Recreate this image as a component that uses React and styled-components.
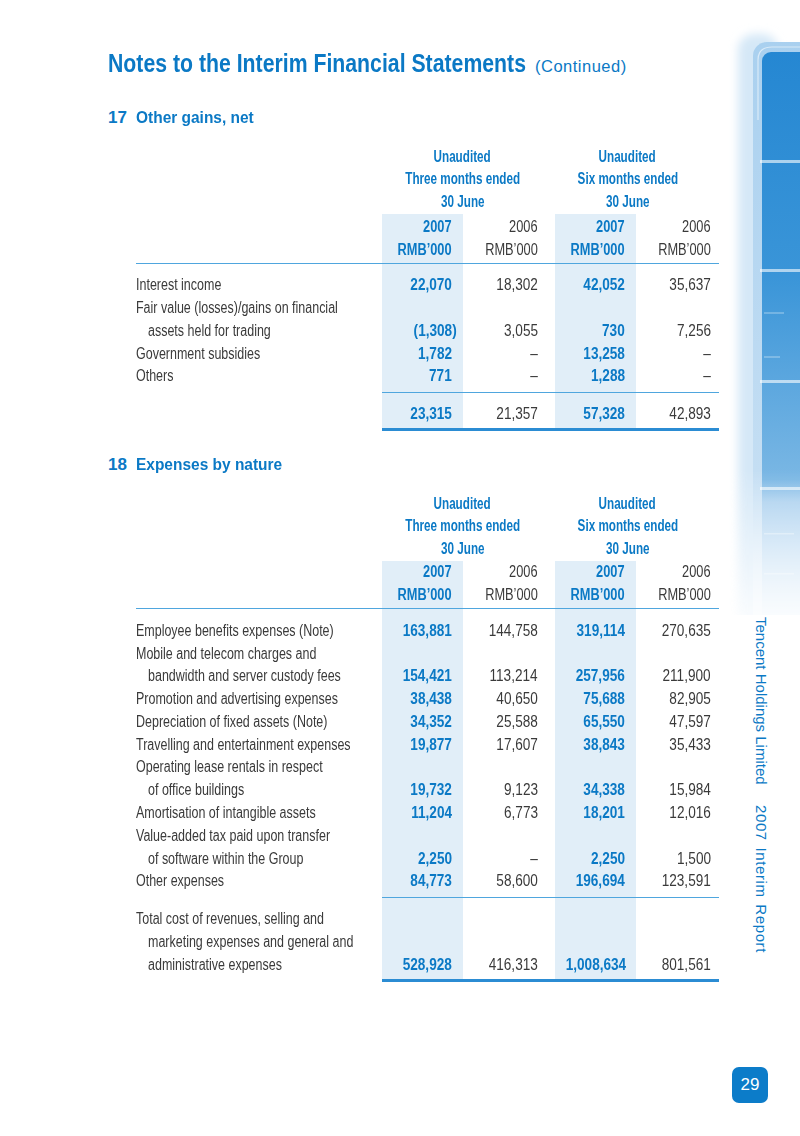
import React from 'react';
import styled, { createGlobalStyle } from 'styled-components';

const BLUE = '#0b79c5';
const INK = '#3a3a3a';
const SHADE = '#e1eef8';
const RULE = '#4fa6de';
const SANS = '"Liberation Sans", Arial, sans-serif';

const GlobalStyle = createGlobalStyle`
  html, body { margin: 0; padding: 0; background: #fff; }
  body { font-family: ${SANS}; color: ${INK}; }
`;

// the print face is a narrow grotesque; squeeze Liberation Sans to its widths
const Fit = styled.span`
  display: inline-block;
  white-space: nowrap;
  transform: scaleX(${p => p.$k});
  transform-origin: ${p => p.$o || 'left'} center;
`;

const Page = styled.div`
  width: 800px;
  height: 1136px;
  display: flex;
  overflow: hidden;
  background: #fff;
`;

const Main = styled.main`
  width: 720px;
  box-sizing: border-box;
  padding: 50px 0 0 108px;
`;

const Title = styled.h1`
  display: flex;
  align-items: baseline;
  margin: 0;
  font-size: 25px;
  line-height: 26px;
  font-weight: 700;
  color: ${BLUE};
  white-space: nowrap;
`;

const TitleMain = styled.span`
  width: 419px;
`;

const Continued = styled.span`
  margin-left: 8px;
  font-weight: 400;
  font-size: 16.5px;
  letter-spacing: 0.5px;
`;

const Heading = styled.h2`
  display: flex;
  margin: ${p => p.$top}px 0 0;
  font-size: 17px;
  line-height: 20px;
  font-weight: 700;
  color: ${BLUE};
  b { width: 28px; }
`;

const Table = styled.div`
  margin: 17.5px 0 0 28px;
  width: 583px;
`;

const Row = styled.div`
  display: grid;
  grid-template-columns: 246px 81px 92px 81px 83px;
  height: ${p => p.$h || 22.8}px;
  line-height: 22.8px;
`;

const HeadRow = styled.div`
  display: grid;
  grid-template-columns: 246px 173px 164px;
  height: 22.8px;
  line-height: 22.8px;
  font-size: 16px;
  font-weight: 700;
  color: ${BLUE};
`;

const HeadCell = styled.div`
  grid-column: ${p => p.$col};
  text-align: center;
  padding-right: ${p => p.$shift}px;
`;

const Label = styled.div`
  padding-left: ${p => (p.$indent ? 12 : 0)}px;
  font-size: 16px;
  white-space: nowrap;
`;

const pads = [11, 17, 11, 8];

const Num = styled.div`
  background: ${p => (p.$shade ? SHADE : 'transparent')};
  text-align: right;
  padding-right: ${p => pads[p.$i] - (p.$neg ? 5 : 0)}px;
  font-size: 16px;
  font-weight: ${p => (p.$strong ? 700 : 400)};
  color: ${p => (p.$strong ? BLUE : INK)};
  white-space: nowrap;
`;

const Rule = styled.div`
  margin-left: ${p => (p.$full ? 0 : 246)}px;
  height: ${p => (p.$thick ? 3 : 1)}px;
  background: ${p => (p.$thick ? '#2b8cd3' : RULE)};
`;

const Aside = styled.aside`
  width: 80px;
  display: flex;
  flex-direction: column;
`;

const Stripe = styled.svg`
  display: block;
  width: 80px;
  height: 615px;
`;

const Spine = styled.div`
  align-self: flex-start;
  margin: 2px 0 0 34px;
  writing-mode: vertical-rl;
  font-size: 15px;
  line-height: 15px;
  color: ${BLUE};
  white-space: nowrap;
  span + span {
    margin-inline-start: 20px;
    letter-spacing: 0.6px;
    word-spacing: 2px;
  }
`;

const PageNo = styled.div`
  margin: auto 0 33px 12px;
  width: 36px;
  height: 36px;
  border-radius: 7px;
  background: #0c7cc9;
  color: #fff;
  font-size: 17px;
  display: flex;
  align-items: center;
  justify-content: center;
`;

const shadeCols = [true, false, true, false];

const Cells = ({ values = ['', '', '', ''], k = 0.85 }) =>
  values.map((v, i) => (
    <Num key={i} $i={i} $shade={shadeCols[i]} $strong={shadeCols[i]} $neg={v.startsWith('(')}>
      {v && <Fit $k={k} $o="right">{v}</Fit>}
    </Num>
  ));

const Gap = ({ h }) => (
  <Row $h={h}>
    <div />
    <Cells />
  </Row>
);

const Line = ({ text, indent, values, k }) => (
  <Row>
    <Label $indent={indent}>{text && <Fit $k={0.78}>{text}</Fit>}</Label>
    <Cells values={values} k={k} />
  </Row>
);

const Item = ({ label, values }) =>
  label.map((t, i) => (
    <Line key={i} text={t} indent={i > 0} values={i === label.length - 1 ? values : undefined} />
  ));

const Head = ({ left, right }) => (
  <HeadRow>
    <HeadCell $col={2} $shift={12}><Fit $k={0.73} $o="center">{left}</Fit></HeadCell>
    <HeadCell $col={3} $shift={19}><Fit $k={0.73} $o="center">{right}</Fit></HeadCell>
  </HeadRow>
);

const Statement = ({ lead, bodyGap, rows, total }) => (
  <Table>
    <Head left="Unaudited" right="Unaudited" />
    <Head left="Three months ended" right="Six months ended" />
    <Head left="30 June" right="30 June" />
    {lead > 0 && <Gap h={lead} />}
    <Line values={['2007', '2006', '2007', '2006']} k={0.8} />
    <Line values={['RMB’000', 'RMB’000', 'RMB’000', 'RMB’000']} k={0.8} />
    <Gap h={1.2} />
    <Rule $full />
    <Gap h={bodyGap} />
    {rows.map((r, i) => (
      <Item key={i} label={r.label} values={r.values} />
    ))}
    <Gap h={3.6} />
    <Rule />
    <Gap h={10.4} />
    <Item label={total.label} values={total.values} />
    <Gap h={2} />
    <Rule $thick />
  </Table>
);

const gains = [
  { label: ['Interest income'], values: ['22,070', '18,302', '42,052', '35,637'] },
  { label: ['Fair value (losses)/gains on financial', 'assets held for trading'], values: ['(1,308)', '3,055', '730', '7,256'] },
  { label: ['Government subsidies'], values: ['1,782', '–', '13,258', '–'] },
  { label: ['Others'], values: ['771', '–', '1,288', '–'] },
];

const expenses = [
  { label: ['Employee benefits expenses (Note)'], values: ['163,881', '144,758', '319,114', '270,635'] },
  { label: ['Mobile and telecom charges and', 'bandwidth and server custody fees'], values: ['154,421', '113,214', '257,956', '211,900'] },
  { label: ['Promotion and advertising expenses'], values: ['38,438', '40,650', '75,688', '82,905'] },
  { label: ['Depreciation of fixed assets (Note)'], values: ['34,352', '25,588', '65,550', '47,597'] },
  { label: ['Travelling and entertainment expenses'], values: ['19,877', '17,607', '38,843', '35,433'] },
  { label: ['Operating lease rentals in respect', 'of office buildings'], values: ['19,732', '9,123', '34,338', '15,984'] },
  { label: ['Amortisation of intangible assets'], values: ['11,204', '6,773', '18,201', '12,016'] },
  { label: ['Value-added tax paid upon transfer', 'of software within the Group'], values: ['2,250', '–', '2,250', '1,500'] },
  { label: ['Other expenses'], values: ['84,773', '58,600', '196,694', '123,591'] },
];

const StripeArt = () => (
  <Stripe viewBox="0 0 80 615">
    <defs>
      <linearGradient id="blk" gradientUnits="userSpaceOnUse" x1="0" y1="50" x2="0" y2="615">
        <stop offset="0" stopColor="#2587d2" />
        <stop offset="0.4" stopColor="#3a95d8" />
        <stop offset="0.6" stopColor="#5ea8df" />
        <stop offset="0.76" stopColor="#7ab7e4" />
        <stop offset="0.8" stopColor="#a9cfee" />
        <stop offset="1" stopColor="#d8eaf8" />
      </linearGradient>
      <linearGradient id="rim" gradientUnits="userSpaceOnUse" x1="0" y1="40" x2="0" y2="615">
        <stop offset="0" stopColor="#a9d0ef" />
        <stop offset="0.75" stopColor="#c4def3" />
        <stop offset="1" stopColor="#e6f1fa" />
      </linearGradient>
      <linearGradient id="fade" gradientUnits="userSpaceOnUse" x1="0" y1="470" x2="0" y2="615">
        <stop offset="0" stopColor="#fff" />
        <stop offset="1" stopColor="#fff" stopOpacity="0.15" />
      </linearGradient>
      <mask id="fadeMask" maskUnits="userSpaceOnUse" x="0" y="0" width="80" height="615">
        <rect x="0" y="0" width="80" height="615" fill="url(#fade)" />
      </mask>
      <filter id="soft" x="-50%" y="-10%" width="200%" height="120%">
        <feGaussianBlur stdDeviation="5" />
      </filter>
    </defs>
    <g mask="url(#fadeMask)">
      <rect x="18" y="34" width="40" height="600" rx="16" fill="#d5e8f7" filter="url(#soft)" />
      <rect x="33" y="42" width="60" height="590" rx="14" fill="url(#rim)" />
      <rect x="42" y="52" width="50" height="580" rx="9" fill="url(#blk)" />
      <path d="M38 120 V60 Q38 47 52 47 H80" fill="none" stroke="#ffffff" strokeOpacity="0.55" strokeWidth="1.2" />
      {[160, 269, 380, 487].map(y => (
        <rect key={y} x="40" y={y} width="40" height="3" fill="#ffffff" fillOpacity="0.6" />
      ))}
      <rect x="44" y="312" width="20" height="2" fill="#ffffff" fillOpacity="0.25" />
      <rect x="44" y="356" width="16" height="2" fill="#ffffff" fillOpacity="0.25" />
      <rect x="44" y="533" width="30" height="1.5" fill="#ffffff" fillOpacity="0.35" />
      <rect x="44" y="573" width="30" height="1.5" fill="#ffffff" fillOpacity="0.35" />
    </g>
  </Stripe>
);

export default function App() {
  return (
    <Page>
      <GlobalStyle />
      <Main>
        <Title>
          <TitleMain><Fit $k={0.85}>Notes to the Interim Financial Statements</Fit></TitleMain>
          <Continued>(Continued)</Continued>
        </Title>

        <Heading $top={29}>
          <b>17</b><Fit $k={0.91}>Other gains, net</Fit>
        </Heading>
        <Statement
          lead={2.6}
          bodyGap={10}
          rows={gains}
          total={{ label: [''], values: ['23,315', '21,357', '57,328', '42,893'] }}
        />

        <Heading $top={24}>
          <b>18</b><Fit $k={0.91}>Expenses by nature</Fit>
        </Heading>
        <Statement
          lead={0}
          bodyGap={11}
          rows={expenses}
          total={{
            label: ['Total cost of revenues, selling and', 'marketing expenses and general and', 'administrative expenses'],
            values: ['528,928', '416,313', '1,008,634', '801,561'],
          }}
        />
      </Main>

      <Aside>
        <StripeArt />
        <Spine>
          <span>Tencent Holdings Limited</span>
          <span>2007 Interim Report</span>
        </Spine>
        <PageNo>29</PageNo>
      </Aside>
    </Page>
  );
}
